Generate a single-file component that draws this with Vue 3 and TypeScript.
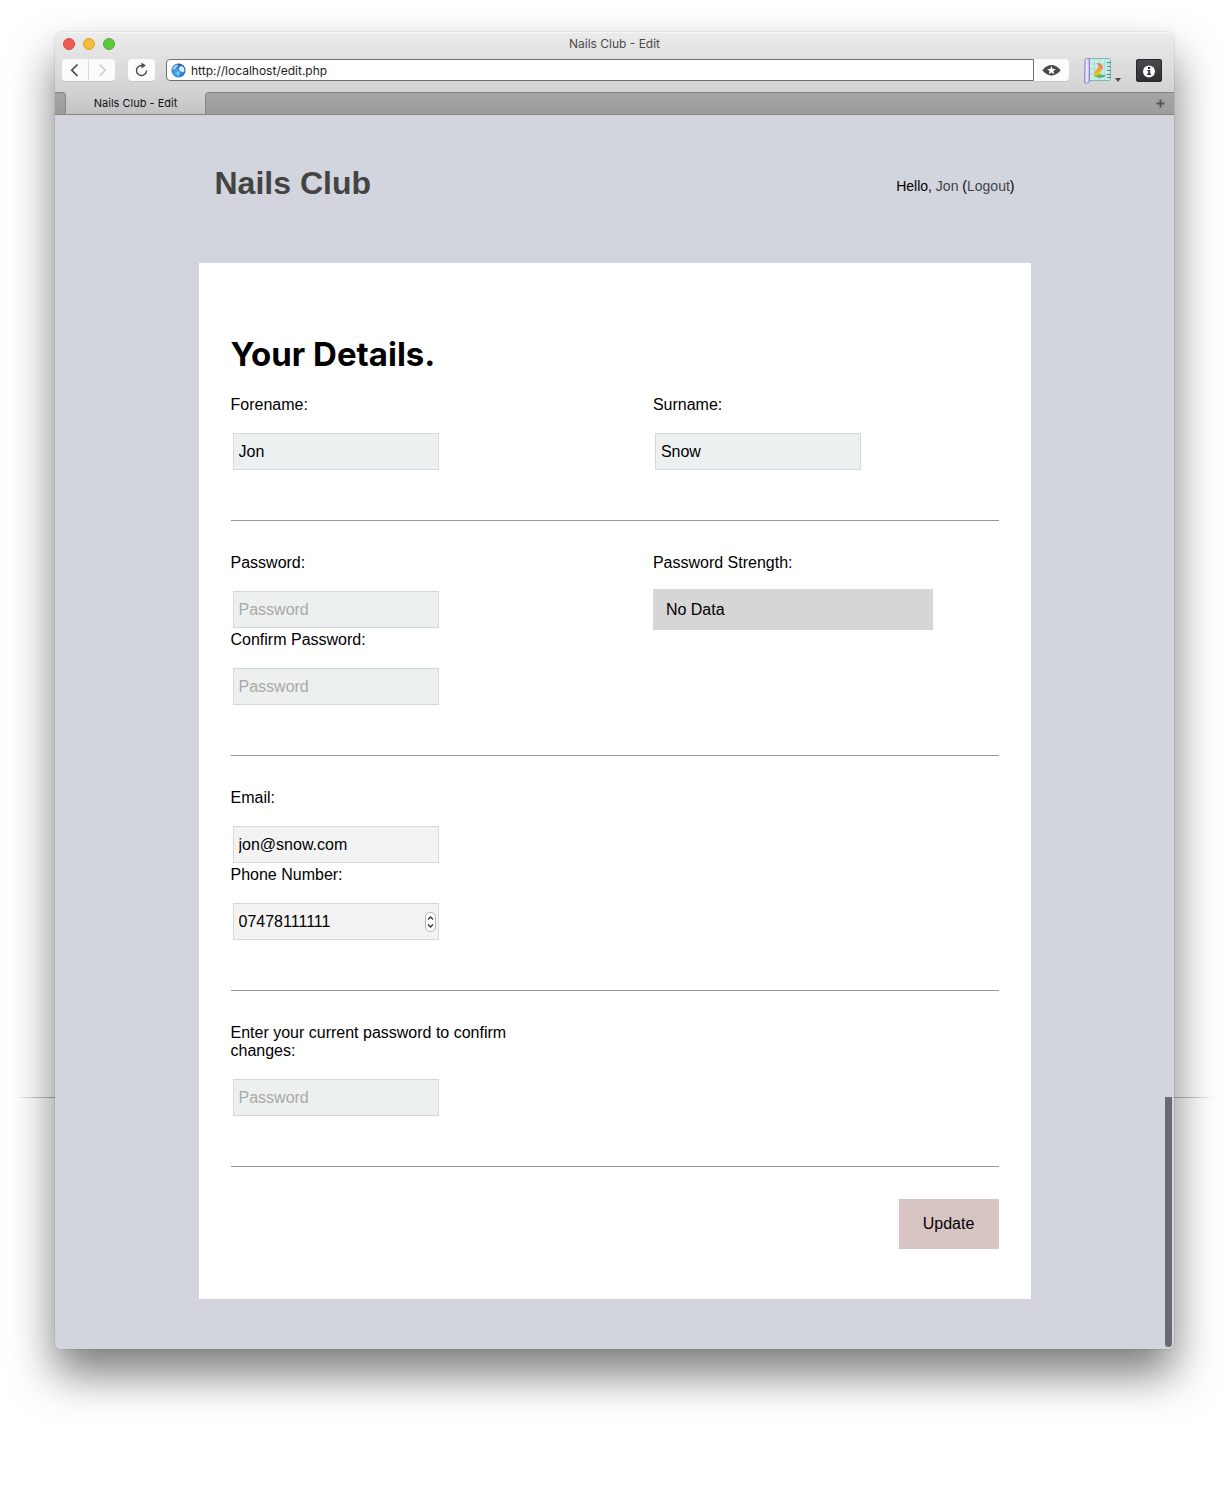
<script setup lang="ts">
import { ref } from 'vue'

const url = ref('http://localhost/edit.php')
const forename = ref('Jon')
const surname = ref('Snow')
const password = ref('')
const confirmation = ref('')
const email = ref('jon@snow.com')
const phone = ref('07478111111')
const currentPassword = ref('')

function stepPhone(delta: number) {
  const next = Math.max(0, Number(phone.value) + delta)
  phone.value = String(next).padStart(11, '0')
}
</script>

<template>
  <div class="window">
    <header class="chrome">
      <div class="titlebar">
        <div class="lights">
          <button class="light close" type="button" aria-label="Close"></button>
          <button class="light minimise" type="button" aria-label="Minimise"></button>
          <button class="light zoom" type="button" aria-label="Zoom"></button>
        </div>
        <div class="title">Nails Club - Edit</div>
        <div class="lights-spacer"></div>
      </div>

      <div class="toolbar">
        <div class="nav">
          <button class="tool back" type="button" aria-label="Back">
            <svg width="26" height="22" viewBox="0 0 26 22"><path d="M15.500 5.500 9.700 11.200 15.500 17" fill="none" stroke="#4a4a4a" stroke-width="1.700" /></svg>
          </button>
          <button class="tool forward" type="button" aria-label="Forward" disabled>
            <svg width="26" height="22" viewBox="0 0 26 22"><path d="M10.500 5.500 16.300 11.200 10.500 17" fill="none" stroke="#cfcfcf" stroke-width="1.700" /></svg>
          </button>
        </div>
        <button class="tool reload" type="button" aria-label="Reload">
          <svg width="27" height="22" viewBox="0 0 27 22">
            <path d="M14.500 6.500H13.500A5 5 0 1 0 18.500 11.500" fill="none" stroke="#4a4a4a" stroke-width="1.400" />
            <path d="M13.500 3.500 17.800 6.600 13.500 9.600Z" fill="#4a4a4a" />
          </svg>
        </button>
        <div class="address">
          <svg class="globe" width="15" height="15" viewBox="0 0 15 15" aria-hidden="true">
            <defs>
              <radialGradient id="globe-fill" cx="40%" cy="65%" r="65%">
                <stop offset="0" stop-color="#58bdf6" />
                <stop offset="0.600" stop-color="#2b7fd0" />
                <stop offset="1" stop-color="#1f5496" />
              </radialGradient>
            </defs>
            <circle cx="7.500" cy="7.500" r="7" fill="url(#globe-fill)" />
            <path d="M2 4.500C3.200 2.400 5.500 1.300 7 1.600L7.300 3 5.500 4.200 4.800 5.600 3.500 6.500 1.500 7Z" fill="#b9dff6" opacity="0.800" />
            <path d="M8.500 4 10.500 2.800 12.800 4.500 13.500 7.500 12.500 9.500 11 8.800 9.500 8.500 8 6.500Z" fill="#eaf7fe" opacity="0.900" />
            <path d="M6 9 8 9.500 8.200 11 7 12.500 5.800 11.500Z" fill="#a8e1fc" opacity="0.700" />
          </svg>
          <input v-model="url" class="url" type="text" aria-label="Address" spellcheck="false" />
        </div>
        <button class="tool watch" type="button" aria-label="Watch page">
          <svg width="35" height="22" viewBox="0 0 35 22">
            <path d="M8.300 11.200C11.500 7.400 14.500 5.900 17.500 5.900S23.500 7.400 26.700 11.200C23.500 15 20.500 16.500 17.500 16.500S11.500 15 8.300 11.200Z" fill="#4a4a4a" />
            <path d="M17.500 6.900 18.700 9.900 21.900 10.100 19.400 12.100 20.200 15.200 17.500 13.500 14.800 15.200 15.600 12.100 13.100 10.100 16.300 9.900Z" fill="#fff" />
          </svg>
        </button>
        <button class="plain palette" type="button" aria-label="Design tools">
          <svg width="38" height="28" viewBox="0 0 38 28">
            <defs>
              <linearGradient id="brush-fill" x1="0.300" y1="0" x2="0.600" y2="1">
                <stop offset="0" stop-color="#ee6a6c" />
                <stop offset="0.400" stop-color="#f0904a" />
                <stop offset="0.650" stop-color="#e2cf2e" />
                <stop offset="0.850" stop-color="#6dbb3f" />
                <stop offset="1" stop-color="#2f8fc0" />
              </linearGradient>
              <linearGradient id="roll-fill">
                <stop offset="0" stop-color="#b7a6e0" />
                <stop offset="0.450" stop-color="#f4efff" />
                <stop offset="1" stop-color="#b3a1dd" />
              </linearGradient>
            </defs>
            <rect x="5.500" y="2.500" width="22" height="22" rx="1" fill="#c6ece6" stroke="#86b5b0" />
            <path d="M6 8H27M6 13H27M6 18H27M11.500 3V24M16.500 3V24M21.500 3V24" stroke="#a5dad3" stroke-width="0.700" />
            <path d="M24 6.500H28M24 10.500H28M24 14.500H28M24 18.500H28M24 21.500H28" stroke="#4f8f8b" />
            <path d="M13.500 7C17.500 6.500 20.500 9 20 12C19.500 14.500 16.800 15.500 17.200 17.500C17.600 19.500 20.500 19 23 19.500C21.500 21.300 16 22 13.500 21.200C10.200 20.200 9.800 17.200 12.200 15C14.500 13 17.800 10.500 13.500 7Z" fill="url(#brush-fill)" />
            <path d="M2 4.500Q2 2.500 4 2.500H6.500V25Q6.500 27 4.500 27H2.500Q1.500 27 1.500 25Z" fill="url(#roll-fill)" stroke="#8d78bf" stroke-width="0.800" />
            <path d="M32 22H38L35 26Z" fill="#4a4a4a" />
          </svg>
        </button>
        <button class="info" type="button" aria-label="Page info">
          <svg width="26" height="23" viewBox="0 0 26 23">
            <circle cx="13" cy="12.500" r="6" fill="#fff" />
            <path d="M12 8.100H14.200V9.900H12ZM11.200 10.900H14.200V14.800H15.200V16.100H11V14.800H12.200V12.100H11.200Z" fill="#333338" />
          </svg>
        </button>
      </div>

      <div class="tabs">
        <div class="tab-edge left"></div>
        <a class="tab" href="#">Nails Club - Edit</a>
        <div class="tab-edge right">
          <button class="plain new-tab" type="button" aria-label="New tab">
            <svg width="9" height="9" viewBox="0 0 9 9"><path d="M4.500 0.500V8.500M0.500 4.500H8.500" stroke="#555" stroke-width="2" /></svg>
          </button>
        </div>
      </div>
    </header>

    <div class="page">
      <div class="site-header">
        <h1 class="brand">Nails Club</h1>
        <p class="greeting">Hello, <a href="#">Jon</a> (<a href="#">Logout</a>)</p>
      </div>

      <form class="panel" @submit.prevent>
        <h2 class="heading">Your Details.</h2>

        <section class="group">
          <div class="column">
            <label for="forename">Forename:</label>
            <input id="forename" v-model="forename" class="field" type="text" />
          </div>
          <div class="column">
            <label for="surname">Surname:</label>
            <input id="surname" v-model="surname" class="field" type="text" />
          </div>
        </section>

        <section class="group">
          <div class="column">
            <label for="password">Password:</label>
            <input id="password" v-model="password" class="field" type="password" placeholder="Password" />
            <label for="confirmation">Confirm Password:</label>
            <input id="confirmation" v-model="confirmation" class="field" type="password" placeholder="Password" />
          </div>
          <div class="column">
            <label for="strength">Password Strength:</label>
            <output id="strength" class="strength">No Data</output>
          </div>
        </section>

        <section class="group">
          <div class="column">
            <label for="email">Email:</label>
            <input id="email" v-model="email" class="field grey" type="email" />
            <label for="phone">Phone Number:</label>
            <div class="stepper-field">
              <input id="phone" v-model="phone" class="field grey" type="text" inputmode="numeric" />
              <div class="stepper">
                <button type="button" aria-label="Increase" @click="stepPhone(1)">
                  <svg width="9" height="9" viewBox="0 0 9 9"><path d="M2 6.500 4.500 4 7 6.500" fill="none" stroke="#333" stroke-width="1.300" /></svg>
                </button>
                <button type="button" aria-label="Decrease" @click="stepPhone(-1)">
                  <svg width="9" height="9" viewBox="0 0 9 9"><path d="M2 2.500 4.500 5 7 2.500" fill="none" stroke="#333" stroke-width="1.300" /></svg>
                </button>
              </div>
            </div>
          </div>
        </section>

        <section class="group">
          <div class="column">
            <label for="current">Enter your current password to confirm changes:</label>
            <input id="current" v-model="currentPassword" class="field" type="password" placeholder="Password" />
          </div>
        </section>

        <div class="actions">
          <button class="update" type="submit">Update</button>
        </div>
      </form>

      <div class="scroll-thumb"></div>
    </div>
  </div>
</template>

<style>
body {
  background: #fff;
}
</style>

<style scoped>
* {
  box-sizing: border-box;
}

.window {
  margin: 32px 57px 150px 55px;
  border-radius: 6px;
  box-shadow: 0 0 1px rgba(0, 0, 0, 0.6), 0 25px 45px rgba(0, 0, 0, 0.52);
  font-family: "Liberation Sans", Arial, sans-serif;
  font-size: 16px;
  line-height: 18px;
  color: #000;
}

button {
  margin: 0;
  padding: 0;
  border: 0;
  font: inherit;
  color: inherit;
}

svg {
  display: block;
}

.chrome {
  border-radius: 6px 6px 0 0;
  background: linear-gradient(#ececec, #d2d2d2 60px);
  box-shadow: inset 0 1px 0 #f6f6f6;
  font-family: Inter, sans-serif;
}

.titlebar {
  display: flex;
  align-items: center;
  height: 23px;
  padding: 0 8px;
}

.lights,
.lights-spacer {
  display: flex;
  flex: 0 0 52px;
  gap: 8px;
}

.light {
  width: 12px;
  height: 12px;
  border: 1px solid;
  border-radius: 50%;
}

.close {
  background: #ee5b54;
  border-color: #d84a43;
}

.minimise {
  background: #f6bd3c;
  border-color: #dda22d;
}

.zoom {
  background: #5dc93f;
  border-color: #4aad30;
}

.title {
  flex: 1;
  text-align: center;
  font-size: 12px;
  color: #4a4a4a;
}

.toolbar {
  display: flex;
  align-items: center;
  height: 37px;
  padding: 0 12px 7px 7px;
}

.nav {
  display: flex;
  gap: 1px;
  margin-right: 13px;
}

.tool {
  height: 22px;
  background: #fbfbfb;
  border-radius: 4px;
  box-shadow: 0 1px 0 rgba(0, 0, 0, 0.08);
}

.back {
  border-radius: 4px 0 0 4px;
}

.forward {
  border-radius: 0 4px 4px 0;
}

.reload {
  margin-right: 11px;
}

.address {
  display: flex;
  flex: 1;
  align-items: center;
  min-width: 0;
  height: 22px;
  padding-left: 4px;
  background: #fff;
  border: 1px solid #6e6e6e;
  border-radius: 4px 0 0 4px;
}

.globe {
  flex: none;
}

.url {
  flex: 1;
  min-width: 0;
  height: 20px;
  padding: 0 5px;
  border: 0;
  background: none;
  font: 12px Inter, sans-serif;
  color: #222;
}

.watch {
  margin-right: 14px;
  border-radius: 0 4px 4px 0;
}

.plain {
  background: none;
}

.palette {
  margin-right: 15px;
}

.info {
  height: 23px;
  background: linear-gradient(#4a4a4e, #2f2f33);
  border-radius: 3px;
  box-shadow: 0 0 0 1px #28282a inset;
}

.tabs {
  display: flex;
  height: 23px;
  border-bottom: 1px solid #858585;
}

.tab-edge {
  background: linear-gradient(#a5a5a5, #9c9c9c);
  border-top: 1px solid #828282;
}

.left {
  width: 11px;
  border-right: 1px solid #858585;
  border-radius: 0 4px 0 0;
}

.right {
  display: flex;
  flex: 1;
  align-items: center;
  justify-content: flex-end;
  padding-right: 9px;
  border-left: 1px solid #858585;
  border-radius: 4px 0 0 0;
}

.tab {
  width: 139px;
  background: linear-gradient(#d2d2d2, #c2c2c2);
  border-radius: 0 0 4px 4px;
  font-size: 11px;
  line-height: 22px;
  text-align: center;
  text-decoration: none;
  color: #111;
}

.page {
  position: relative;
  padding: 0 16px 50px;
  background: #d2d5dd;
  border-radius: 0 0 6px 6px;
}

/* Hairlines that fade out over the window's shadow, level with the scroll thumb. */
.page::before,
.page::after {
  content: "";
  position: absolute;
  bottom: 251px;
  width: 40px;
  height: 1px;
}

.page::before {
  right: 100%;
  background: linear-gradient(270deg, #858585, transparent);
}

.page::after {
  left: 100%;
  background: linear-gradient(90deg, #858585, transparent);
}

.site-header {
  display: flex;
  align-items: center;
  justify-content: space-between;
  max-width: 832px;
  margin: 0 auto;
  padding: 48px 16px 60px;
}

.brand {
  margin: 0;
  font-size: 32px;
  line-height: 40px;
  color: #444;
}

.greeting {
  margin: 6px 0 0;
  font-size: 14px;
}

.greeting a {
  color: #444;
  text-decoration: none;
}

.panel {
  max-width: 832px;
  margin: 0 auto;
  padding: 71px 32px 50px;
  background: #fff;
}

.heading {
  margin: 0 0 21px;
  font-family: Inter, sans-serif;
  font-size: 33px;
  font-weight: 700;
  line-height: 40px;
}

.group {
  display: grid;
  grid-template-columns: 55% 45%;
  margin-bottom: 32px;
  padding-bottom: 48px;
  border-bottom: 1px solid #999;
}

.column {
  display: flex;
  flex-direction: column;
  max-width: 300px;
}

label {
  padding: 1px 0 17px;
}

.field {
  width: 206px;
  height: 37px;
  margin: 2px;
  padding: 0 5px;
  background: #ecf0f1;
  border: 1px solid #d5d9db;
  border-radius: 0;
  font: 16px "Liberation Sans", Arial, sans-serif;
  color: #000;
}

.field::placeholder {
  color: #a9a9a9;
}

.grey {
  background: #f3f3f3;
  border-color: #d9d9d9;
}

.stepper-field {
  position: relative;
  display: flex;
  width: 210px;
}

.stepper {
  position: absolute;
  top: 11px;
  right: 5px;
  width: 11px;
  border: 1px solid #b5b5b5;
  border-radius: 5px;
  background: #fff;
}

.stepper button {
  display: block;
  background: none;
}

.strength {
  display: block;
  width: 280px;
  max-width: 100%;
  padding: 12px 13px 11px;
  background: #d6d6d6;
}

.actions {
  display: flex;
  justify-content: flex-end;
}

.update {
  width: 100px;
  height: 50px;
  background: #d9c4c4;
}

.scroll-thumb {
  position: absolute;
  right: 2px;
  bottom: 2px;
  width: 7px;
  height: 250px;
  background: #696b70;
  border-radius: 0 0 4px 4px;
}
</style>
